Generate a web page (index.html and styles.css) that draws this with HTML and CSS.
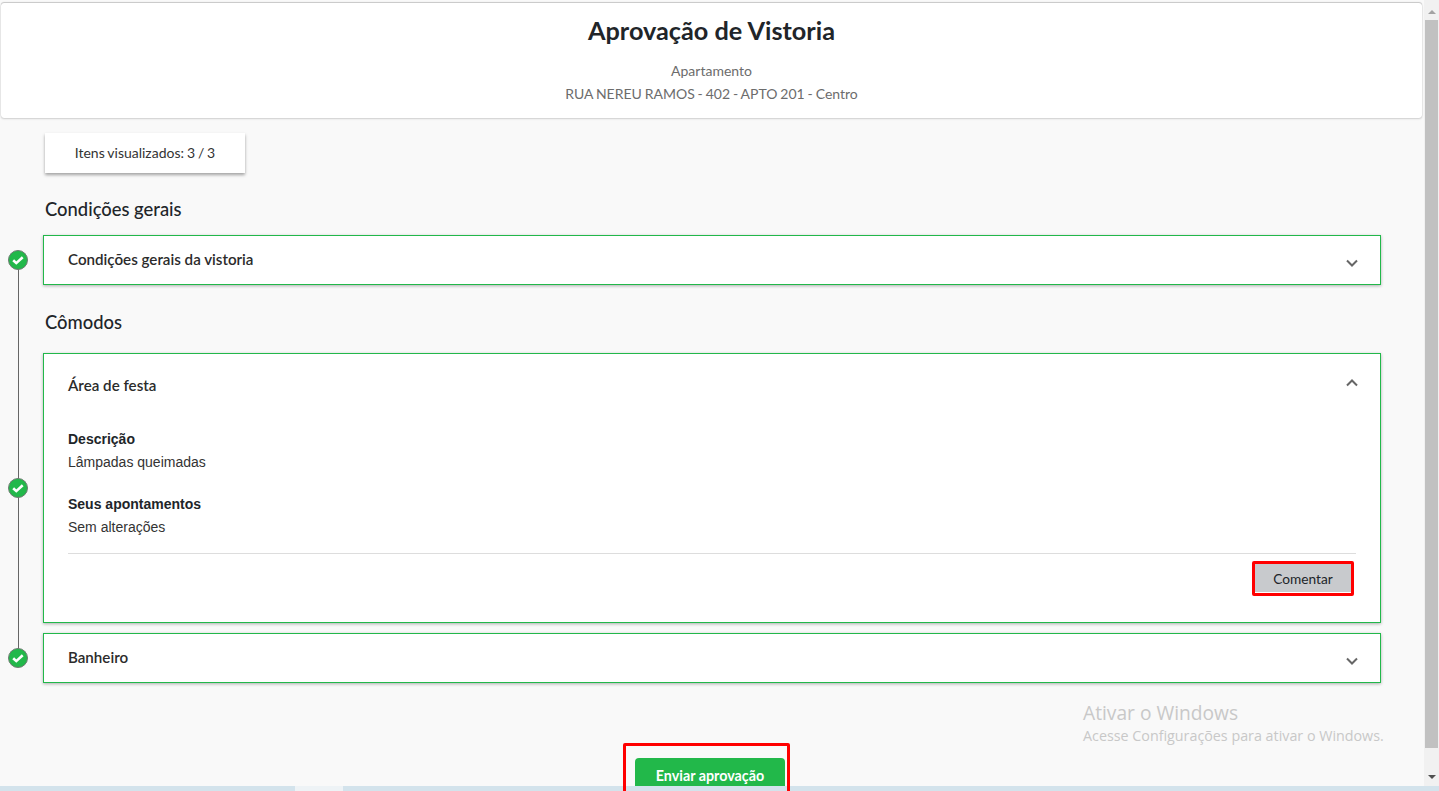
FILE: index.html
```html
<!DOCTYPE html>
<html lang="pt-BR">
<head>
<meta charset="utf-8">
<title>Aprovação de Vistoria</title>
<link rel="stylesheet" href="styles.css">
</head>
<body>
<div class="screen">
  <div class="window">
    <main class="page">
      <header class="hero">
        <h1 class="hero-title">Aprovação de Vistoria</h1>
        <p class="hero-type">Apartamento</p>
        <p class="hero-address">RUA NEREU RAMOS - 402 - APTO 201 - Centro</p>
      </header>
      <div class="counter">Itens visualizados: 3 / 3</div>
      <div class="timeline">
        <span class="timeline-line"></span>
        <h2 class="section-title first">Condições gerais</h2>
        <section class="row">
          <span class="marker"><svg viewBox="0 0 20 20" width="20" height="20"><circle cx="10" cy="10" r="9.5" fill="#22b84a" stroke="#6f7b72"/><path d="M5.2 10.2l3.1 2.9 6.4-5.9" fill="none" stroke="#fff" stroke-width="2.6"/></svg></span>
          <div class="card collapsed">
            <div class="card-head">
              <span class="card-title">Condições gerais da vistoria</span>
              <svg class="chevron" viewBox="0 0 12 8" width="12" height="8"><path d="M1 1.5l5 5 5-5" fill="none" stroke="#666" stroke-width="2"/></svg>
            </div>
          </div>
        </section>
        <h2 class="section-title second">Cômodos</h2>
        <section class="row">
          <span class="marker"><svg viewBox="0 0 20 20" width="20" height="20"><circle cx="10" cy="10" r="9.5" fill="#22b84a" stroke="#6f7b72"/><path d="M5.2 10.2l3.1 2.9 6.4-5.9" fill="none" stroke="#fff" stroke-width="2.6"/></svg></span>
          <div class="card expanded">
            <div class="card-head open">
              <span class="card-title">Área de festa</span>
              <svg class="chevron up" viewBox="0 0 12 8" width="12" height="8"><path d="M1 6.5l5-5 5 5" fill="none" stroke="#666" stroke-width="2"/></svg>
            </div>
            <div class="detail">
              <h3 class="detail-label">Descrição</h3>
              <p class="detail-text">Lâmpadas queimadas</p>
              <h3 class="detail-label lower">Seus apontamentos</h3>
              <p class="detail-text">Sem alterações</p>
            </div>
            <div class="card-actions">
              <button class="comment" type="button">Comentar</button>
            </div>
          </div>
        </section>
        <section class="row last">
          <span class="marker"><svg viewBox="0 0 20 20" width="20" height="20"><circle cx="10" cy="10" r="9.5" fill="#22b84a" stroke="#6f7b72"/><path d="M5.2 10.2l3.1 2.9 6.4-5.9" fill="none" stroke="#fff" stroke-width="2.6"/></svg></span>
          <div class="card collapsed">
            <div class="card-head">
              <span class="card-title">Banheiro</span>
              <svg class="chevron" viewBox="0 0 12 8" width="12" height="8"><path d="M1 1.5l5 5 5-5" fill="none" stroke="#666" stroke-width="2"/></svg>
            </div>
          </div>
        </section>
      </div>
      <div class="submit-wrap">
        <button class="submit" type="button">Enviar aprovação</button>
      </div>
    </main>
    <div class="scrollbar">
      <span class="arrow arrow-up"></span>
      <span class="thumb"></span>
      <span class="arrow arrow-down"></span>
    </div>
  </div>
  <div class="taskbar"><span class="taskbar-gap"></span></div>
  <span class="annotation annotation-comment"></span>
  <span class="annotation annotation-submit"></span>
  <div class="watermark">
    <div class="watermark-title">Ativar o Windows</div>
    <div class="watermark-text">Acesse Configurações para ativar o Windows.</div>
  </div>
</div>
</body>
</html>
```
FILE: styles.css
```css
* { box-sizing: border-box; }
html, body { margin: 0; height: 100%; overflow: hidden; }
body { font-family: Lato, "Liberation Sans", sans-serif; color: #212529; background: #f9f9f9; }
.screen { position: relative; width: 1439px; height: 791px; display: flex; flex-direction: column; overflow: hidden; }
.window { flex: 1; min-height: 0; display: flex; overflow: hidden; }
.page { width: 1424px; flex: none; background: #f9f9f9; padding-top: 3px; }
.hero { width: 1421px; height: 115px; margin-left: 1px; background: #fff; border-radius: 3px; box-shadow: 0 -1px 1px rgba(0,0,0,.18), 0 1px 2px rgba(0,0,0,.16), 0 0 1px rgba(0,0,0,.2); text-align: center; padding-top: 11px; }
.hero-title { margin: 0; font-size: 25.25px; line-height: 32px; font-weight: 700; color: #212529; }
.hero-type { margin: 14px 0 0; font-size: 14px; line-height: 22px; color: #6c6c6c; }
.hero-address { margin: 1px 0 0; font-size: 14px; line-height: 22px; color: #6c6c6c; word-spacing: -.7px; }
.counter { width: 200px; height: 40px; margin: 15px 0 0 45px; background: #fff; box-shadow: 0 2px 3px rgba(0,0,0,.35); display: flex; align-items: center; justify-content: center; font-size: 14px; color: #333; word-spacing: -.7px; padding-bottom: 2px; }
.timeline { position: relative; }
.timeline-line { position: absolute; left: 18px; top: 87px; width: 1px; height: 398px; background: #666; }
.section-title { margin: 0 0 0 45px; font-size: 18.4px; line-height: 24px; font-weight: 500; color: #212529; }
.section-title.first { padding-top: 24px; padding-bottom: 14px; }
.section-title.second { padding-top: 25px; padding-bottom: 19px; }
.row { display: flex; align-items: center; position: relative; }
.row.last { margin-top: 10px; }
.marker { flex: none; width: 43px; padding-left: 8px; height: 20px; display: block; position: relative; }
.marker svg { display: block; }
.card { width: 1338px; background: #fff; border: 1px solid #22b84a; box-shadow: 0 1px 3px rgba(0,0,0,.3); }
.card-head { height: 48px; display: flex; align-items: center; justify-content: space-between; padding: 0 22px 2px 24px; }
.card-head.open { height: 62px; padding-bottom: 0; }
.card-title { font-size: 15.15px; font-weight: 600; color: #2b2b2b; }
.chevron { margin-top: 7px; }
.chevron.up { margin-top: -4px; }
.detail { padding: 11px 24px 0; font-family: "Liberation Sans", Arial, sans-serif; font-size: 14px; }
.detail-label { margin: 0; font-size: 14px; line-height: 24px; font-weight: 700; color: #212529; }
.detail-label.lower { margin-top: 19px; }
.detail-text { margin: 0; line-height: 22px; color: #333; }
.card-actions { margin: 15px 24px 0; border-top: 1px solid #ddd; padding: 10px 5px 30px 0; display: flex; justify-content: flex-end; }
.comment { width: 96px; height: 28px; border: 0; background: #c8cacd; font-family: Lato, sans-serif; font-size: 13.7px; color: #212529; padding: 0; }
.submit-wrap { margin-top: 75px; display: flex; justify-content: center; padding-right: 4px; }
.submit { width: 150px; height: 40px; border: 0; border-radius: 4px; background: #22b84a; color: #fff; font-family: Lato, sans-serif; font-size: 14.3px; font-weight: 700; padding: 0 0 5px; }
.scrollbar { flex: 1; background: #f1f1f1; display: flex; flex-direction: column; align-items: center; }
.arrow { flex: none; width: 0; height: 0; border-left: 4px solid transparent; border-right: 4px solid transparent; }
.arrow-up { border-bottom: 4px solid #a3a3a3; margin: 10px 0 6px; }
.arrow-down { border-top: 4px solid #505050; margin: 27px 0 0; }
.thumb { flex: none; width: 13px; height: 728px; background: #c1c1c1; }
.taskbar { flex: none; height: 5px; background: #d3e3ec; position: relative; z-index: 1; }
.taskbar-gap { position: absolute; left: 295px; top: 0; width: 48px; height: 5px; background: #eef3f6; }
.annotation { position: absolute; z-index: 2; border: 3px solid #f00; border-radius: 2px; }
.annotation-comment { left: 1252px; top: 561px; width: 102px; height: 35px; }
.annotation-submit { left: 623px; top: 743px; width: 167px; height: 60px; }
.watermark { position: absolute; left: 1083px; top: 700px; font-family: "Open Sans", sans-serif; color: #c8c8c8; }
.watermark-title { font-size: 19.2px; line-height: 25px; }
.watermark-text { font-size: 14.3px; line-height: 20px; margin-top: 1px; white-space: nowrap; }
```
